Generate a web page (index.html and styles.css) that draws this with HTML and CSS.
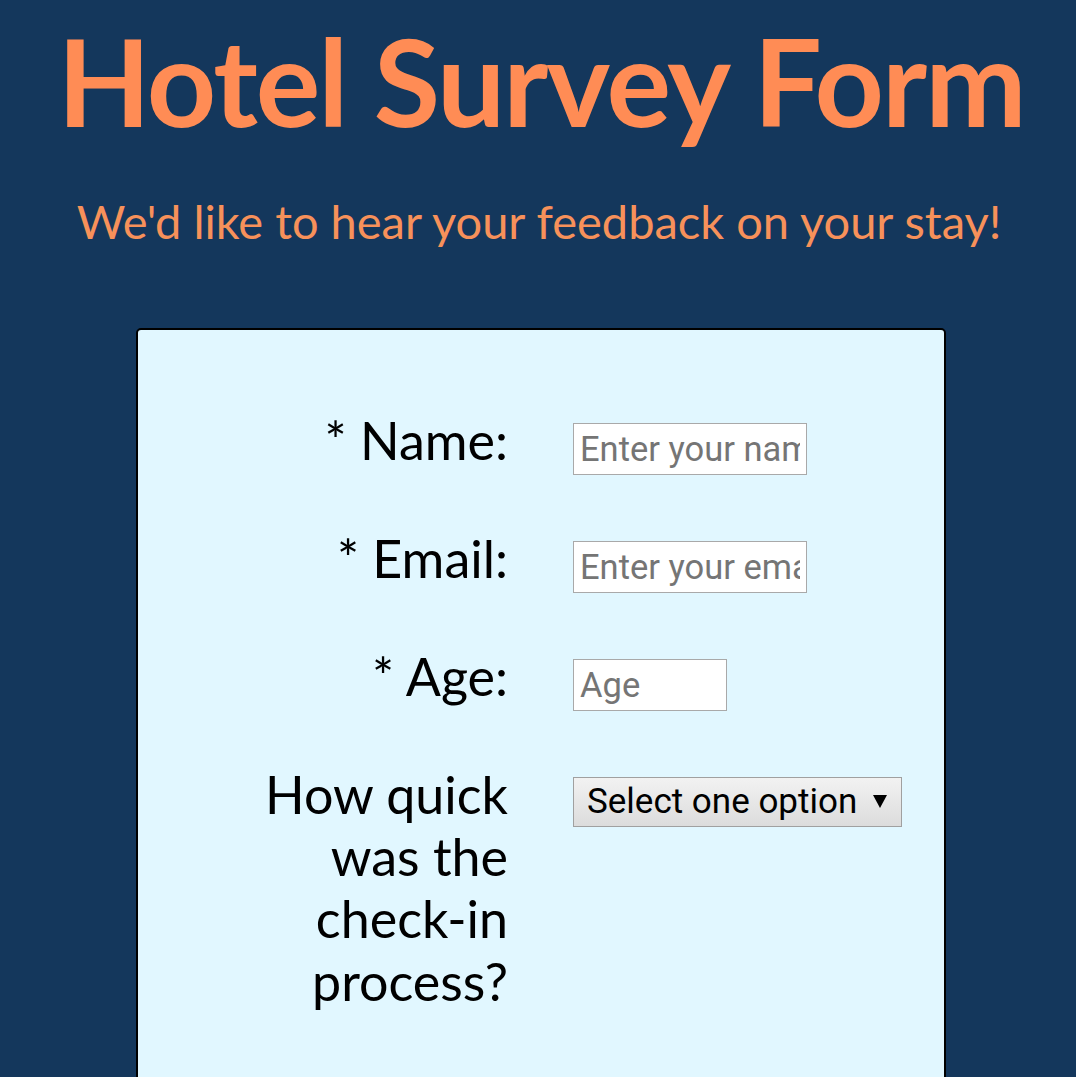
FILE: index.html
```html
<!DOCTYPE html>
<html lang="en">
<head>
<meta charset="utf-8">
<title>Hotel Survey Form</title>
<link rel="stylesheet" href="styles.css">
</head>
<body>
<header class="header">
  <h1 class="title">Hotel Survey Form</h1>
  <p class="subtitle">We'd like to hear your feedback on your stay!</p>
</header>
<form class="survey">
  <div class="row">
    <label class="label" for="name">* Name:</label>
    <div class="field"><input class="input" id="name" type="text" placeholder="Enter your name"></div>
  </div>
  <div class="row">
    <label class="label" for="email">* Email:</label>
    <div class="field"><input class="input" id="email" type="email" placeholder="Enter your email"></div>
  </div>
  <div class="row">
    <label class="label" for="age">* Age:</label>
    <div class="field"><input class="input input-age" id="age" type="number" placeholder="Age"></div>
  </div>
  <div class="row">
    <label class="label label-narrow" for="checkin">How quick was the check-in process?</label>
    <div class="field"><div class="select" id="checkin"><span>Select one option</span><span class="arrow"></span></div></div>
  </div>
</form>
</body>
</html>
```
FILE: styles.css
```css
html, body {
  margin: 0;
  padding: 0;
}
body {
  background: #14375c;
  font-family: Lato, "Open Sans", sans-serif;
  overflow: hidden;
}
.header {
  text-align: center;
}
.title {
  margin: 8px 0 0;
  font-size: 121px;
  font-weight: 700;
  line-height: 1.2;
  letter-spacing: -2px;
  padding-left: 6px;
  color: #ff8c55;
}
.subtitle {
  margin: 40px 0 0;
  font-size: 47px;
  line-height: 1.2;
  padding-left: 2px;
  color: #f7915a;
}
.survey {
  margin: 78px 0 0 calc(50% - 402px);
  width: 806px;
  background: #e1f7ff;
  border: 2px solid #000;
  border-radius: 5px;
  padding: 79px 0 160px;
  display: flex;
  flex-direction: column;
  gap: 52px;
}
.row {
  display: flex;
  align-items: flex-start;
}
.label {
  box-sizing: border-box;
  width: 370px;
  text-align: right;
  font-size: 52px;
  line-height: 1.2;
  color: #000;
}
.label-narrow {
  padding-left: 100px;
}
.field {
  margin-left: 65px;
  padding-top: 14px;
}
.input {
  display: block;
  box-sizing: border-box;
  width: 234px;
  height: 52px;
  margin: 0;
  padding: 0 6px;
  border: 1px solid #a9a9a9;
  background: #fff;
  font-family: Roboto, sans-serif;
  font-size: 34.5px;
  color: #000;
  outline: none;
}
.input::placeholder {
  color: #757575;
}
.input-age {
  width: 154px;
}
.select {
  box-sizing: border-box;
  width: 329px;
  height: 50px;
  border: 1px solid #a0a0a0;
  background: linear-gradient(#f2f2f2, #dcdcdc);
  font-family: Roboto, sans-serif;
  font-size: 35px;
  color: #000;
  display: flex;
  align-items: center;
  justify-content: space-between;
  padding: 0 14px 0 13px;
}
.arrow {
  width: 0;
  height: 0;
  border-left: 7px solid transparent;
  border-right: 7px solid transparent;
  border-top: 13px solid #000;
}
```
